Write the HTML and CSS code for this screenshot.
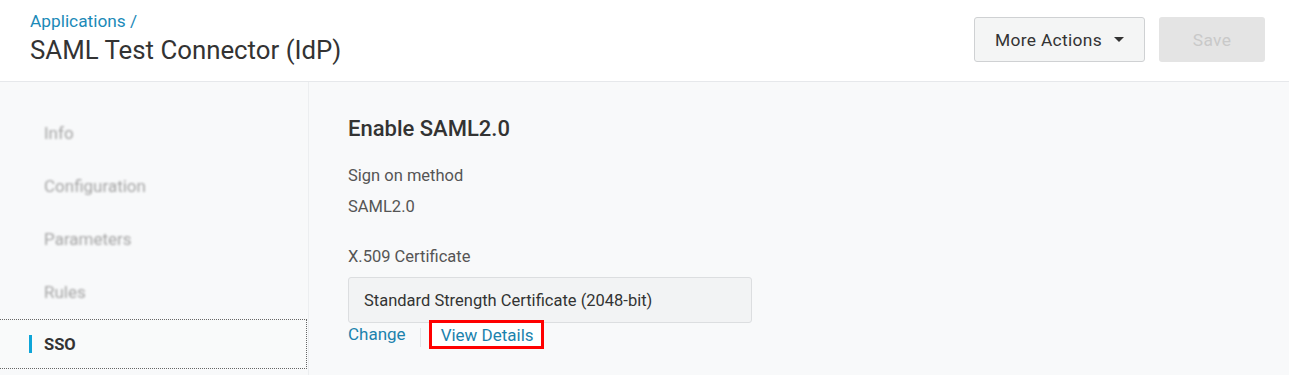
FILE: index.html
```html
<!DOCTYPE html>
<html>
<head>
<meta charset="utf-8">
<link rel="stylesheet" href="styles.css">
</head>
<body>
<header class="header">
  <div class="titles">
    <a class="crumb">Applications /</a>
    <h1 class="title">SAML Test Connector (IdP)</h1>
  </div>
  <div class="actions">
    <button class="btn more">More Actions <span class="caret"></span></button>
    <button class="btn save">Save</button>
  </div>
</header>
<div class="body">
  <nav class="sidebar">
    <div class="nav-item blur">Info</div>
    <div class="nav-item blur">Configuration</div>
    <div class="nav-item blur">Parameters</div>
    <div class="nav-item blur">Rules</div>
    <div class="nav-item active"><span class="bar"></span>SSO</div>
  </nav>
  <main class="content">
    <h2 class="section-title">Enable SAML2.0</h2>
    <div class="label">Sign on method</div>
    <div class="value">SAML2.0</div>
    <div class="label cert-label">X.509 Certificate</div>
    <div class="field">Standard Strength Certificate (2048-bit)</div>
    <div class="links">
      <a class="link">Change</a>
      <span class="sep"></span>
      <a class="link highlight">View Details</a>
    </div>
  </main>
</div>
</body>
</html>
```

FILE: styles.css
```css
* { box-sizing: border-box; }
html, body { margin: 0; height: 100%; }
body {
  font-family: Roboto, "Liberation Sans", sans-serif;
  background: #f8f9fa;
  color: #333;
  overflow: hidden;
}
.header {
  height: 82px;
  background: #fff;
  border-bottom: 1px solid #e6e8eb;
  display: flex;
  justify-content: space-between;
  align-items: flex-start;
  padding: 0 24px 0 30px;
}
.titles { padding-top: 10px; }
.crumb {
  display: block;
  color: #1b8ab8;
  font-size: 17.3px;
  line-height: 22px;
}
.title {
  margin: 2px 0 0;
  font-size: 25.8px;
  letter-spacing: 0;
  font-weight: 400;
  line-height: 32px;
  color: #333;
}
.actions {
  display: flex;
  gap: 14px;
  padding-top: 17px;
}
.btn {
  height: 45px;
  font-family: inherit;
  font-size: 17.4px;
  border-radius: 3px;
  letter-spacing: 0.3px;
}
.more {
  width: 171px;
  background: #f4f5f5;
  border: 1px solid #cfd1d3;
  color: #333;
  display: flex;
  align-items: center;
  justify-content: center;
  gap: 12px;
  padding: 0;
}
.caret {
  width: 0; height: 0;
  border-left: 5px solid transparent;
  border-right: 5px solid transparent;
  border-top: 5px solid #333;
}
.save {
  width: 106px;
  background: #e4e4e4;
  border: none;
  color: #c9c9c9;
}
.body {
  display: flex;
  height: calc(100% - 82px);
}
.sidebar {
  width: 309px;
  border-right: 1px solid #eceef0;
  padding-top: 24px;
  flex-shrink: 0;
}
.nav-item {
  height: 53px;
  display: flex;
  align-items: center;
  padding-left: 44px;
  font-size: 17px;
  color: #999;
}
.blur { filter: blur(0.9px); color: #a5a5a5; }
.active {
  position: relative;
  width: 307px;
  height: 50px;
  margin-top: 1px;
  border-top: 1px dotted #666;
  border-bottom: 1px dotted #666;
  border-right: 1px dotted #666;
  background: #f9fafa;
  font-weight: 700;
  font-size: 16.5px;
  color: #333;
  padding-left: 44px;
}
.bar {
  position: absolute;
  left: 29px;
  top: 15px;
  width: 3px;
  height: 18px;
  background: #0ea5d8;
}
.content {
  padding: 34px 0 0 39px;
  color: #555;
}
.section-title {
  margin: 0;
  font-size: 22px;
  font-weight: 500;
  line-height: 26px;
  color: #333;
}
.label {
  margin-top: 24px;
  font-size: 16.5px;
  line-height: 20px;
  color: #555;
}
.value {
  margin-top: 11px;
  font-size: 16.5px;
  line-height: 20px;
  color: #555;
}
.cert-label { margin-top: 30px; }
.field {
  margin-top: 10px;
  width: 404px;
  height: 46px;
  background: #f2f3f4;
  border: 1px solid #dcdee0;
  border-radius: 3px;
  display: flex;
  align-items: center;
  padding-left: 15px;
  font-size: 16.5px;
  color: #333;
}
.links {
  display: flex;
  align-items: center;
  margin-top: -4px;
  height: 30px;
}
.link {
  color: #1b82ad;
  font-size: 17px;
}
.sep {
  width: 1px;
  height: 19px;
  background: #e2e4e6;
  margin: 6px 8px 0 14px;
}
.highlight {
  border: 3px solid #f00;
  background: #fff;
  padding: 1px 7px 0 9px;
  line-height: 22px;
}
```
